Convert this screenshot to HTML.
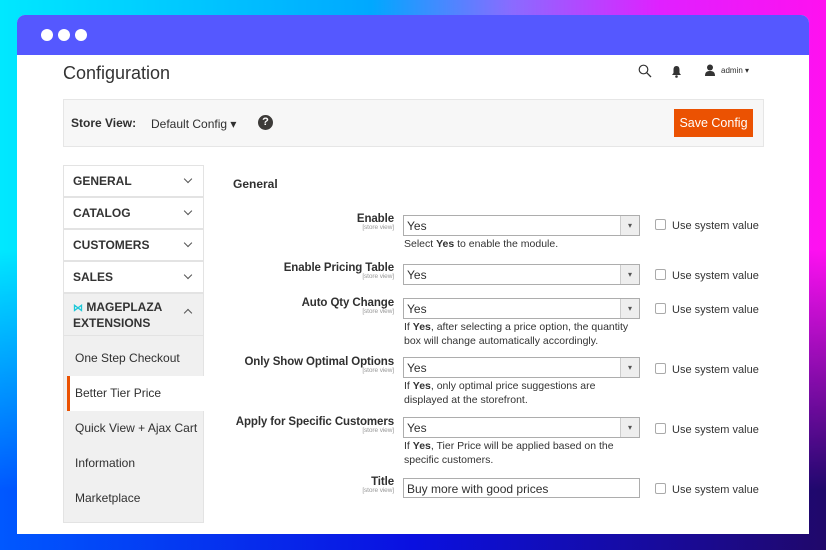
<!DOCTYPE html>
<html><head><style>
*{margin:0;padding:0;box-sizing:border-box}
body{width:826px;height:550px;overflow:hidden;font-family:"Liberation Sans",sans-serif;color:#303030;position:relative;
background:linear-gradient(90deg,#00e8ff 0%,#00a8ff 45%,#8a6bff 62%,#e020ff 80%,#ff10f0 100%);}
.bg2{position:absolute;left:0;right:0;top:0;bottom:0;background:linear-gradient(180deg,rgba(0,0,0,0) 25%,rgba(0,0,0,0) 40%),linear-gradient(90deg,rgba(0,40,255,0),rgba(0,40,255,0));}
.bg3{position:absolute;left:0;right:0;bottom:0;height:300px;background:linear-gradient(90deg,#0058ff,#0a10e0 50%,#1a0a90 85%,#20086a);-webkit-mask:linear-gradient(180deg,transparent,#000 80%);mask:linear-gradient(180deg,transparent,#000 80%)}
.win{position:absolute;left:17px;top:15px;width:792px;height:519px;background:#fff;border-radius:8px 8px 0 0;overflow:hidden}
.bar{height:40px;background:#5558ff;position:relative}
.dot{position:absolute;top:14px;width:12px;height:12px;border-radius:50%;background:#fff}
.a{position:absolute;white-space:nowrap}
.side{position:absolute;left:46px;width:141px;border:1px solid #e3e3e3;font-size:12px;font-weight:bold;padding-left:9px;color:#333}
.chev{position:absolute;right:12px;top:10px;width:6px;height:6px;border-right:1px solid #555;border-bottom:1px solid #555;transform:rotate(45deg)}
.sub{position:absolute;left:46px;width:141px;font-size:12px;padding-left:12px;color:#333;background:#f0f0f0}
.lbl{position:absolute;right:415px;text-align:right;font-size:11.5px;font-weight:bold;white-space:nowrap;letter-spacing:-.1px}
.lbl i{display:block;font-style:normal;font-weight:normal;font-size:6.5px;color:#999;margin-top:-1px}
.sel{position:absolute;left:386px;width:237px;height:21px;border:1px solid #adadad;font-size:12px;padding:3px 3px}
.dd:after{content:"▾";position:absolute;right:0;top:0;width:18px;height:19px;border-left:1px solid #ccc;background:#eee;font-size:8px;text-align:center;line-height:19px;color:#555}
.note{position:absolute;left:387px;font-size:10.5px;line-height:14px;color:#333}
.cb{position:absolute;left:638px;font-size:11px;color:#333}
.cb:before{content:"";display:inline-block;width:9px;height:9px;border:1px solid #aaa;border-radius:2px;margin-right:6px;vertical-align:-1px}
</style></head><body>
<div class="bg3"></div>
<div class="win">
<div class="bar"><div class="dot" style="left:24px"></div><div class="dot" style="left:41px"></div><div class="dot" style="left:58px"></div></div>
<div class="a" style="left:46px;top:48px;font-size:18px;color:#333">Configuration</div>
<svg class="a" style="left:621px;top:49px" width="14" height="14" viewBox="0 0 14 14"><circle cx="5.5" cy="5.5" r="4.3" fill="none" stroke="#333" stroke-width="1.2"/><path d="M8.6 8.6L13 13" stroke="#333" stroke-width="1.3"/></svg>
<svg class="a" style="left:654px;top:50px" width="11" height="13" viewBox="0 0 11 13"><path d="M5.5 1C3 1 2.5 3 2.5 5V8L1 10H10L8.5 8V5C8.5 3 8 1 5.5 1Z" fill="#333"/><circle cx="5.5" cy="11.5" r="1.3" fill="#333"/></svg>
<svg class="a" style="left:687px;top:49px" width="12" height="12" viewBox="0 0 12 12"><circle cx="6" cy="3.5" r="3" fill="#333"/><path d="M1 12C1 8 3 7 6 7S11 8 11 12Z" fill="#333"/></svg>
<div class="a" style="left:704px;top:51px;font-size:8px">admin ▾</div>
<div class="a" style="left:46px;top:84px;width:701px;height:48px;background:#f7f7f7;border:1px solid #e6e6e6"></div>
<div class="a" style="left:54px;top:101px;font-size:12px;font-weight:bold">Store View:</div>
<div class="a" style="left:134px;top:102px;font-size:12px">Default Config ▾</div>
<div class="a" style="left:241px;top:100px;width:15px;height:15px;border-radius:50%;background:#3d3b39;color:#fff;font-size:11px;font-weight:bold;text-align:center;line-height:15px">?</div>
<div class="a" style="left:657px;top:94px;width:79px;height:28px;background:#eb5202;color:#fff;font-size:12.5px;text-align:center;line-height:28px">Save Config</div>

<div class="side" style="top:150px;height:32px;line-height:30px">GENERAL<span class="chev"></span></div>
<div class="side" style="top:182px;height:32px;line-height:30px">CATALOG<span class="chev"></span></div>
<div class="side" style="top:214px;height:32px;line-height:30px">CUSTOMERS<span class="chev"></span></div>
<div class="side" style="top:246px;height:32px;line-height:30px">SALES<span class="chev"></span></div>
<div class="side" style="top:278px;height:43px;background:#f0f0f0;line-height:15px;padding-top:6px"><span style="color:#1ec8d8;font-size:10px">⋈</span> MAGEPLAZA<br>EXTENSIONS<span class="chev" style="transform:rotate(225deg);top:16px"></span></div>
<div class="sub" style="top:321px;height:187px;border:1px solid #e3e3e3;border-top:none"></div>
<div class="a" style="left:58px;top:336px;font-size:12px">One Step Checkout</div>
<div class="a" style="left:50px;top:361px;width:137px;height:35px;background:#fff;border-left:3px solid #eb5202"></div>
<div class="a" style="left:58px;top:371px;font-size:12px">Better Tier Price</div>
<div class="a" style="left:58px;top:406px;font-size:12px">Quick View + Ajax Cart</div>
<div class="a" style="left:58px;top:441px;font-size:12px">Information</div>
<div class="a" style="left:58px;top:476px;font-size:12px">Marketplace</div>

<div class="a" style="left:216px;top:162px;font-size:12px;font-weight:bold">General</div>

<div class="lbl" style="top:198px">Enable<i>[store view]</i></div>
<div class="sel dd" style="top:200px">Yes</div>
<div class="note" style="top:222px">Select <b>Yes</b> to enable the module.</div>
<div class="cb" style="top:204px">Use system value</div>

<div class="lbl" style="top:247px">Enable Pricing Table<i>[store view]</i></div>
<div class="sel dd" style="top:249px">Yes</div>
<div class="cb" style="top:254px">Use system value</div>

<div class="lbl" style="top:282px">Auto Qty Change<i>[store view]</i></div>
<div class="sel dd" style="top:283px">Yes</div>
<div class="note" style="top:305px">If <b>Yes</b>, after selecting a price option, the quantity<br>box will change automatically accordingly.</div>
<div class="cb" style="top:288px">Use system value</div>

<div class="lbl" style="top:341px">Only Show Optimal Options<i>[store view]</i></div>
<div class="sel dd" style="top:342px">Yes</div>
<div class="note" style="top:364px">If <b>Yes</b>, only optimal price suggestions are<br>displayed at the storefront.</div>
<div class="cb" style="top:348px">Use system value</div>

<div class="lbl" style="top:401px">Apply for Specific Customers<i>[store view]</i></div>
<div class="sel dd" style="top:402px">Yes</div>
<div class="note" style="top:424px">If <b>Yes</b>, Tier Price will be applied based on the<br>specific customers.</div>
<div class="cb" style="top:408px">Use system value</div>

<div class="lbl" style="top:461px">Title<i>[store view]</i></div>
<div class="sel" style="top:463px;height:20px">Buy more with good prices</div>
<div class="cb" style="top:468px">Use system value</div>
</div>
</body></html>
